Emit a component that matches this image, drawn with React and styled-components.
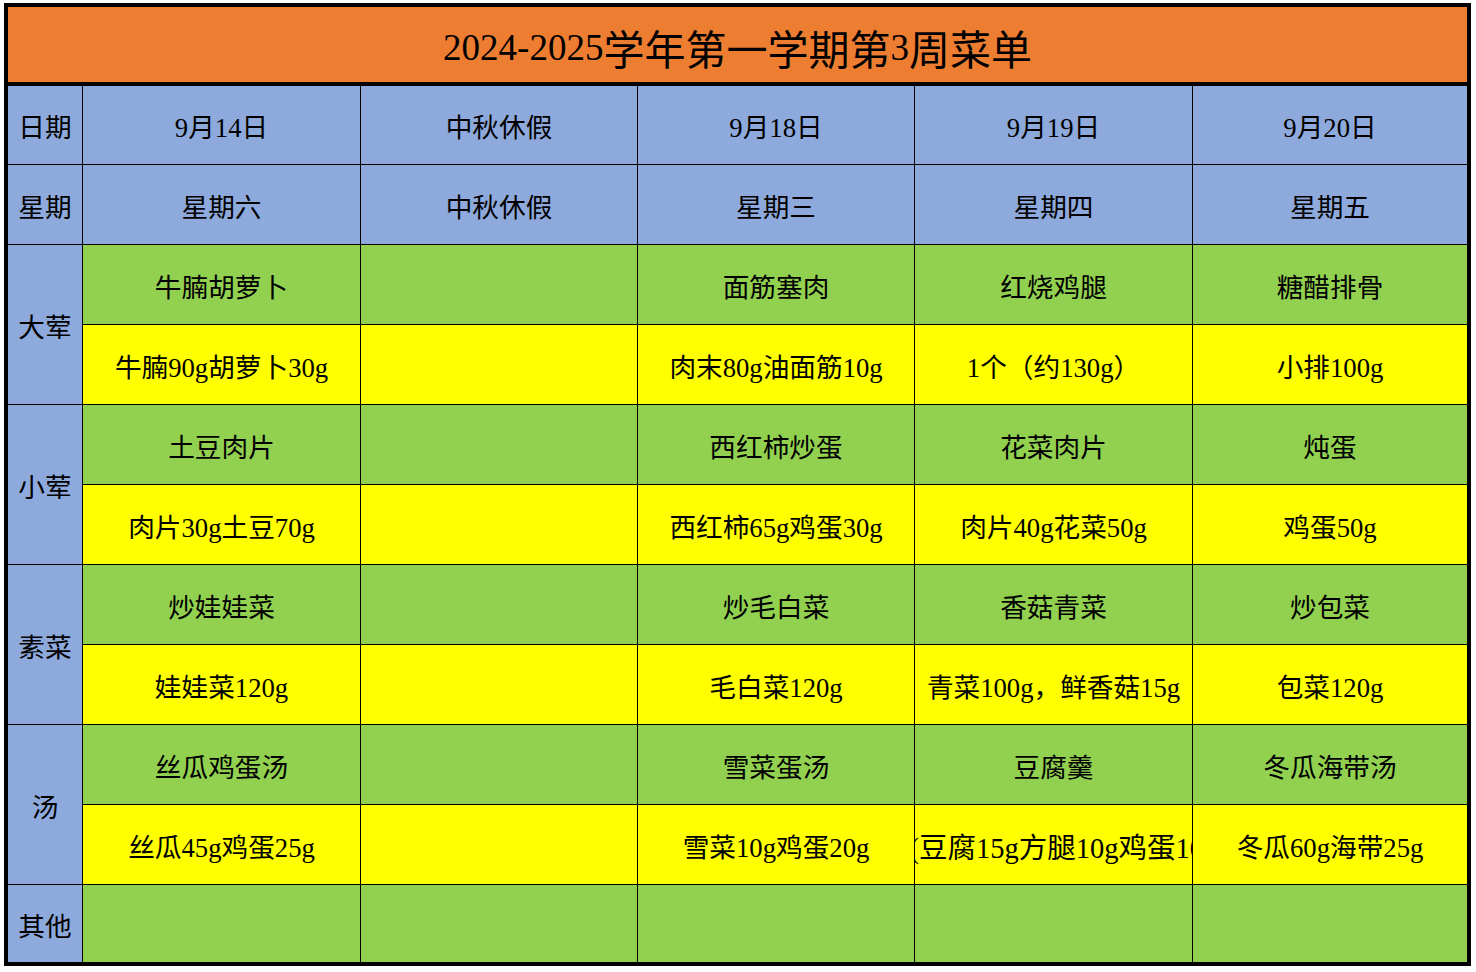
import styled, { createGlobalStyle } from "styled-components";

const GlobalStyle = createGlobalStyle`
  html, body {
    margin: 0;
    padding: 0;
    background: #ffffff;
  }
  body {
    font-family: "Liberation Serif", "Noto Sans CJK SC", serif;
    color: #000;
  }
`;

const Page = styled.div`
  padding: 3px 0 0 4px;
`;

const Sheet = styled.div`
  width: 1459px;
  border: 4px solid #000;
  background: #000;
`;

const Title = styled.div`
  height: 75px;
  display: flex;
  align-items: center;
  justify-content: center;
  padding-top: 5px;
  box-sizing: border-box;
  margin-bottom: 4px;
  background: #ed7d31;
  font-size: 41px;
  white-space: nowrap;
`;

// the digits in the title are narrower than the hanzi around them
const Num = styled.span`
  font-size: 37px;
`;

const Grid = styled.div`
  display: grid;
  grid-template-columns: 74px 277px 276px 276px 277px 274px;
  grid-template-rows: 78px repeat(9, 79px) 77px;
  gap: 1px;
  background: #000;
`;

const colors = {
  blue: "#8ea9db",
  green: "#92d050",
  yellow: "#ffff00",
};

const Cell = styled.div`
  background: ${(p) => colors[p.$tone]};
  grid-row: ${(p) => (p.$span ? `span ${p.$span}` : "auto")};
  display: flex;
  align-items: center;
  justify-content: center;
  padding-top: 1px;
  padding-left: ${(p) => p.$shift || 0}px;
  box-sizing: border-box;
  overflow: hidden;
  white-space: nowrap;
  font-size: ${(p) => p.$size || 26.67}px;
`;

const dates = ["9月14日", "中秋休假", "9月18日", "9月19日", "9月20日"];
const weekdays = ["星期六", "中秋休假", "星期三", "星期四", "星期五"];

const groups = [
  {
    label: "大荤",
    dish: ["牛腩胡萝卜", "", "面筋塞肉", "红烧鸡腿", "糖醋排骨"],
    amount: ["牛腩90g胡萝卜30g", "", "肉末80g油面筋10g", "1个（约130g）", "小排100g"],
  },
  {
    label: "小荤",
    dish: ["土豆肉片", "", "西红柿炒蛋", "花菜肉片", "炖蛋"],
    amount: ["肉片30g土豆70g", "", "西红柿65g鸡蛋30g", "肉片40g花菜50g", "鸡蛋50g"],
  },
  {
    label: "素菜",
    dish: ["炒娃娃菜", "", "炒毛白菜", "香菇青菜", "炒包菜"],
    amount: ["娃娃菜120g", "", "毛白菜120g", "青菜100g，鲜香菇15g", "包菜120g"],
  },
  {
    label: "汤",
    dish: ["丝瓜鸡蛋汤", "", "雪菜蛋汤", "豆腐羹", "冬瓜海带汤"],
    amount: ["丝瓜45g鸡蛋25g", "", "雪菜10g鸡蛋20g", "(豆腐15g方腿10g鸡蛋10g)", "冬瓜60g海带25g"],
  },
];

function wideCell(text) {
  // the overflowing soup cell is clipped by its neighbours
  return text.startsWith("(") ? { $size: 28.5, $shift: 30 } : {};
}

export default function App() {
  return (
    <Page>
      <GlobalStyle />
      <Sheet>
        <Title>
          <Num>2024-2025</Num>学年第一学期第<Num>3</Num>周菜单
        </Title>
        <Grid>
          <Cell $tone="blue">日期</Cell>
          {dates.map((d, i) => (
            <Cell key={"d" + i} $tone="blue">
              {d}
            </Cell>
          ))}
          <Cell $tone="blue">星期</Cell>
          {weekdays.map((d, i) => (
            <Cell key={"w" + i} $tone="blue">
              {d}
            </Cell>
          ))}
          {groups.map((g) => [
            <Cell key={g.label} $tone="blue" $span={2}>
              {g.label}
            </Cell>,
            ...g.dish.map((d, i) => (
              <Cell key={g.label + "d" + i} $tone="green">
                {d}
              </Cell>
            )),
            ...g.amount.map((a, i) => (
              <Cell key={g.label + "a" + i} $tone="yellow" {...wideCell(a)}>
                {a}
              </Cell>
            )),
          ])}
          <Cell $tone="blue">其他</Cell>
          {[0, 1, 2, 3, 4].map((i) => (
            <Cell key={"o" + i} $tone="green" />
          ))}
        </Grid>
      </Sheet>
    </Page>
  );
}
